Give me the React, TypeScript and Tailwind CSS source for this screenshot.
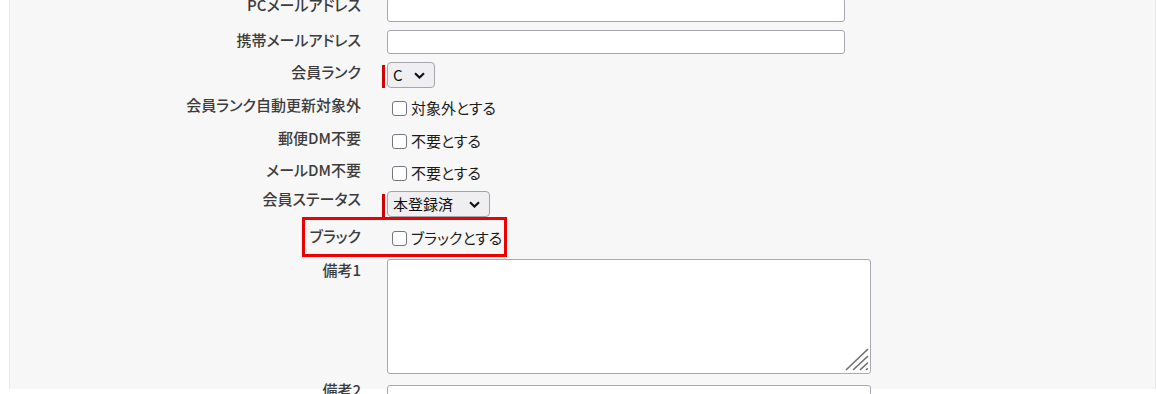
import React from "react";

type RowProps = {
  label: string;
  rowClass: string;
  labelClass?: string;
  controlClass?: string;
  children: React.ReactNode;
  overlay?: React.ReactNode;
};

function Row({ label, rowClass, labelClass = "", controlClass = "", children, overlay }: RowProps) {
  return (
    <div className={`relative flex items-start ${rowClass}`}>
      <div
        className={`w-[351px] shrink-0 text-right text-[15px] leading-[20px] font-medium text-[#3c3c3c] [font-feature-settings:'palt'] ${labelClass}`}
      >
        {label}
      </div>
      <div className={`ml-[21px] ${controlClass}`}>{children}</div>
      {overlay}
    </div>
  );
}

function TextInput({ wide = false }: { wide?: boolean }) {
  return (
    <input
      type="text"
      className={`ml-[5px] block h-[24px] rounded-[3px] border border-[#a8a8b2] bg-white ${wide ? "w-[484px]" : "w-[458px]"}`}
    />
  );
}

function Chevron() {
  return (
    <svg width="11" height="7" viewBox="0 0 11 7" className="shrink-0">
      <path d="M1 1.2 L5.5 5.6 L10 1.2" fill="none" stroke="#111" strokeWidth="2.1" />
    </svg>
  );
}

function RequiredSelect({ value, widthClass }: { value: string; widthClass: string }) {
  return (
    <div className="flex items-stretch">
      <span className="mt-[3px] w-[3px] bg-[#d40000]" />
      <div
        className={`ml-[2px] flex h-[26px] items-center justify-between rounded-[4px] border border-[#a5a5ae] bg-[#efeff1] pl-[5px] pr-[9px] text-[15px] text-[#111] ${widthClass}`}
      >
        <span>{value}</span>
        <Chevron />
      </div>
    </div>
  );
}

function Check({ text }: { text: string }) {
  return (
    <label className="ml-[10px] flex h-[20px] items-center text-[15px] text-[#1a1a1a] [font-feature-settings:'palt']">
      <input
        type="checkbox"
        className="h-[15px] w-[15px] appearance-none rounded-[3px] border-[1.5px] border-[#76767e] bg-white"
      />
      <span className="ml-[4px]">{text}</span>
    </label>
  );
}

function ResizeGrip() {
  return (
    <svg
      width="24"
      height="23"
      viewBox="0 0 24 23"
      className="pointer-events-none absolute bottom-[3px] right-[2px]"
    >
      <g stroke="#6e6e6e" strokeWidth="1.6" strokeLinecap="round">
        <line x1="1.5" y1="21.5" x2="22.5" y2="1.5" />
        <line x1="8.5" y1="21.5" x2="22.5" y2="8.5" />
        <line x1="15.5" y1="21.5" x2="22.5" y2="15" />
        <line x1="21.5" y1="21.5" x2="22.3" y2="20.8" />
      </g>
    </svg>
  );
}

export default function App() {
  return (
    <div className="h-[394px] w-full overflow-hidden bg-white font-['Noto_Sans_CJK_JP',sans-serif]">
      <div className="ml-[9px] mr-[1px] h-full border-x border-[#e9e9e9] bg-[#f7f7f7]">
        <div className="-mt-[5px] flex flex-col">
          <Row label="PCメールアドレス" rowClass="h-[35px]" controlClass="mt-[3px]">
            <TextInput />
          </Row>
          <Row label="携帯メールアドレス" rowClass="h-[32px]">
            <TextInput />
          </Row>
          <Row label="会員ランク" rowClass="h-[33px]">
            <RequiredSelect value="C" widthClass="w-[48px]" />
          </Row>
          <Row label="会員ランク自動更新対象外" rowClass="h-[33px]" controlClass="mt-[3px]">
            <Check text="対象外とする" />
          </Row>
          <Row label="郵便DM不要" rowClass="h-[32px]" controlClass="mt-[3px]">
            <Check text="不要とする" />
          </Row>
          <Row label="メールDM不要" rowClass="h-[29px]" controlClass="mt-[3px]">
            <Check text="不要とする" />
          </Row>
          <Row label="会員ステータス" rowClass="h-[37px]" controlClass="mt-[2px]">
            <RequiredSelect value="本登録済" widthClass="w-[103px]" />
          </Row>
          <Row
            label="ブラック"
            rowClass="h-[33px]"
            controlClass="mt-[2px]"
            overlay={
              <div className="pointer-events-none absolute left-[292px] top-[-9px] h-[40px] w-[205px] border-[3px] border-[#ee0000]" />
            }
          >
            <Check text="ブラックとする" />
          </Row>
          <Row label="備考1" rowClass="h-[121px]" labelClass="pt-[1px]">
            <div className="relative ml-[5px] h-[115px] w-[484px]">
              <textarea className="block h-full w-full resize-none rounded-[3px] border border-[#a8a8b2] bg-white" />
              <ResizeGrip />
            </div>
          </Row>
          <Row label="備考2" rowClass="h-[40px]" controlClass="mt-[5px]">
            <TextInput wide />
          </Row>
        </div>
      </div>
    </div>
  );
}
